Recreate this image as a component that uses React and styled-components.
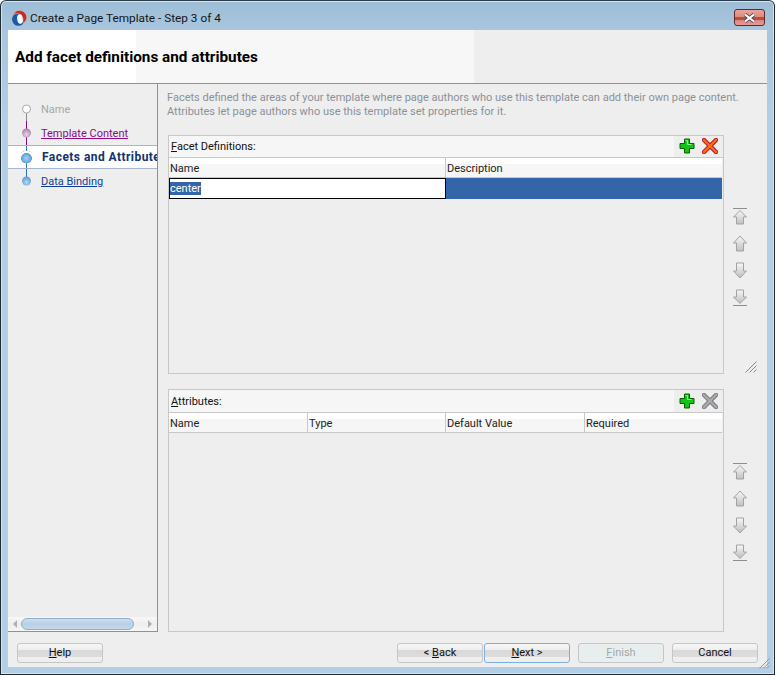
import React from "react";
import styled, { createGlobalStyle } from "styled-components";

const Global = createGlobalStyle`
  html, body { margin: 0; padding: 0; background: #fff; }
  body { font-family: Roboto, "Noto Sans", "Liberation Sans", sans-serif; font-size: 11px; color: #111; }
  * { box-sizing: border-box; }
`;

const Frame = styled.div`
  width: 775px; height: 675px; display: flex; flex-direction: column; position: relative;
  background: linear-gradient(180deg, #9dbdd6 0, #a9c6de 30px, #b3cfe8 120px, #b3cfe8 100%);
  border: 1px solid #1f2a33; border-top-color: #2a3a46; border-radius: 6px 6px 0 0;
  box-shadow: inset 0 0 0 1px #d5e4f0;
`;
const TitleBar = styled.div`
  height: 29px; flex: none; display: flex; align-items: center; padding: 5px 9px 0 10px;
`;
const TitleText = styled.span`
  margin-left: 3px; font-size: 11.8px; color: #10161c; white-space: nowrap;
`;
const CloseButton = styled.div`
  margin: 0 0 1px auto; width: 31px; height: 17px; border: 1px solid #5e2a2a; border-radius: 3px;
  display: flex; align-items: center; justify-content: center;
  background: linear-gradient(180deg, #e9a398 0, #dc8d80 45%, #b5503f 46%, #b5503f 65%, #dd837a 66%, #ea9a94 100%);
`;
const Body = styled.div`
  flex: 1; margin: 0 7px 7px 7px; background: #eeeeee; display: flex; flex-direction: column; min-height: 0;
`;
const Header = styled.div`
  height: 54px; flex: none; display: flex; align-items: center; padding-left: 7px; border-bottom: 1px solid #8f9295;
  background: linear-gradient(90deg, #fff 0, #fff 128px, #f7f7f7 128px, #f7f7f7 466px, #eeeeee 466px);
`;
const HeaderTitle = styled.h1`
  margin: 0; font-size: 15.3px; font-weight: 700; color: #000; white-space: nowrap;
`;
const Main = styled.div`
  height: 548px; flex: none; display: flex;
`;
const Nav = styled.div`
  width: 150px; flex: none; display: flex; flex-direction: column; justify-content: space-between;
  border-right: 1px solid #8f9295; border-bottom: 1px solid #8f9295; overflow: hidden;
`;
const StepList = styled.div`
  padding-top: 13px; display: flex; flex-direction: column;
`;
const StepRow = styled.div`
  position: relative; height: 24px; display: flex; align-items: center; padding-left: 33px; white-space: nowrap;
  ${p => p.$current && `
    background: #fff; border-top: 1px solid #a6b6cc; border-bottom: 1px solid #a6b6cc; padding-left: 34px;
  `}
`;
const Track = styled.span`
  position: absolute; left: 18px; width: 1px;
  top: ${p => p.$top}px; height: ${p => p.$h}px; background: ${p => p.$c};
`;
const Dot = styled.span`
  position: absolute; top: 50%; left: ${p => p.$ring ? 12 : 14}px; border-radius: 50%;
  transform: translateY(-50%);
  width: ${p => p.$ring ? 13 : 9}px; height: ${p => p.$ring ? 13 : 9}px;
  ${p => p.$ring ? `background: radial-gradient(circle at 50% 60%, #a6d2f2 0, #5e9fdc 50%, #fff 56%, #fff 70%, #7fb0dc 74%);`
    : p.$kind === "blue" ? `background: radial-gradient(circle at 50% 65%, #b4dbf6 0, #5b9ad2 75%, #7fa9cf 100%);`
    : p.$kind === "purple" ? `background: radial-gradient(circle at 50% 65%, #e6d6e8 0, #a884ac 75%, #a58aab 100%);`
    : `background: #fff; border: 1px solid #a9a9a9;`}
`;
const StepLabel = styled.span`
  ${p => p.$kind === "muted" && `color: #a8a9a2;`}
  ${p => p.$kind === "visited" && `color: #8b0a8b; text-decoration: underline;`}
  ${p => p.$kind === "link" && `color: #0f3f9c; text-decoration: underline;`}
  ${p => p.$kind === "current" && `color: #12316f; font-weight: 700; font-size: 12px; letter-spacing: .45px;`}
`;
const HScroll = styled.div`
  height: 14px; display: flex; align-items: center; background: linear-gradient(180deg,#f8f8f8,#eeeeee 50%,#f6f6f6); padding: 0 4px;
`;
const Thumb = styled.div`
  width: 113px; height: 12px; margin-left: 4px; border-radius: 6px; border: 1px solid #8fb0cc;
  background: linear-gradient(180deg,#cfdfee,#b9cfe4 50%,#c5d8ea);
`;
const ArrowL = styled.span`
  width: 0; height: 0; border-top: 4px solid transparent; border-bottom: 4px solid transparent;
  border-right: 4px solid #b5adb5; margin-left: 1px;
`;
const ArrowR = styled(ArrowL)`
  border-right: 0; border-left: 4px solid #b5adb5; margin-left: 14px;
`;
const Content = styled.div`
  flex: 1; min-width: 0; padding: 7px 0 0 9px; display: flex; flex-direction: column;
`;
const Intro = styled.p`
  margin: 0 0 16px; height: 28px; line-height: 14px; color: #8b9198; white-space: nowrap;
`;
const Section = styled.div`
  display: flex; height: ${p => p.$h}px; margin: 0 0 ${p => p.$mb || 0}px 1px;
`;
const Panel = styled.div`
  width: 556px; flex: none; border: 1px solid #c8c8c8; display: flex; flex-direction: column; background: #eeeeee;
`;
const PanelHead = styled.div`
  height: ${p => p.$h}px; flex: none; display: flex; align-items: center; padding-left: 2px; border-bottom: 1px solid #c8c8c8;
  background: linear-gradient(90deg, #f6f6f6 0, #f6f6f6 505px, #eeeeee 505px);
`;
const Tools = styled.div`
  margin-left: auto; display: flex; gap: 7px; align-items: center; padding: 0 5px 1px 0; height: 100%;
`;
const Cols = styled.div`
  display: grid; grid-template-columns: ${p => p.$cols}; height: 20px; flex: none;
  border-bottom: 1px solid #c8c8c8; margin-right: 1px; background: linear-gradient(180deg,#fff 0,#fff 6px,#f6f6f6 6px);
`;
const ColHead = styled.div`
  display: flex; align-items: center; padding: 2px 0 0 1px; border-right: 1px solid #c8c8c8; color: #222;
  &:last-child { border-right: 0; }
`;
const Row = styled.div`
  display: grid; grid-template-columns: 277px 1fr; height: 21px; margin-right: 1px;
`;
const EditCell = styled.div`
  background: #fff; border: 1px solid #000; display: flex; align-items: center;
`;
const Sel = styled.span`
  background: #3465a8; color: #fff; line-height: 13px;
`;
const SelCell = styled.div` background: #3465a8; `;
const U = styled.span` text-decoration: underline; `;
const Side = styled.div`
  flex: 1; display: flex; flex-direction: column; align-items: flex-start; padding: ${p => p.$pt}px 0 0 8px; gap: 10px;
`;
const Grip = styled.div`
  margin: auto 0 0 13px; height: 13px; line-height: 0;
`;
const Footer = styled.div`
  flex: 1; display: flex; align-items: flex-start; padding: 11px 9px 0 9px;
`;
const Btn = styled.div`
  width: 86px; height: 20px; border-radius: 3px; display: flex; align-items: center; justify-content: center; padding-bottom: 2px;
  border: 1px solid ${p => p.$focus ? "#7fb0dc" : "#c6c6c6"};
  margin-left: ${p => p.$ml || 0}px; color: ${p => p.$disabled ? "#a4a8a8" : "#111"};
  background: ${p => p.$disabled ? "#e8eeee" :
    "linear-gradient(180deg,#f6f6f6 0,#f0f0f0 30%,#d9d9d9 35%,#dcdcdc 70%,#f0f0f0 75%,#eeeeee 100%)"};
`;
const FrameGrip = styled.div`
  position: absolute; left: 758px; top: 657px; line-height: 0;
`;

const Logo = () => (
  <svg width="16" height="16" viewBox="0 0 16 16">
    <circle cx="8.5" cy="7.5" r="7" fill="#f08a6a" />
    <path d="M3 3.5A7 7 0 0 1 15.4 8C15 10 14 11.5 12.5 12.5 13 9 12 5 8 3.5 6 2.9 4.5 3 3 3.5Z" fill="#d8261c" />
    <path d="M3 5A6.2 6.2 0 0 0 9 15.4C11 15.4 12.5 14 12.5 11 12.5 7.5 10 3.8 7 3.8 5.4 3.8 4 4 3 5Z" fill="#1d5aa6" />
    <ellipse cx="9" cy="9" rx="2.8" ry="4.8" fill="#fff" transform="rotate(-8 9 9)" />
  </svg>
);
const CloseX = () => (
  <svg width="13" height="10" viewBox="0 0 13 10">
    <path d="M2 1.5 11 8.5M11 1.5 2 8.5" stroke="#4c4560" strokeWidth="3.6" />
    <path d="M2 1.5 11 8.5M11 1.5 2 8.5" stroke="#fff" strokeWidth="2.2" />
  </svg>
);
const Plus = () => (
  <svg width="16" height="16" viewBox="0 0 16 16">
    <path d="M5.5 1h5v4.5H15v5h-4.5V15h-5v-4.5H1v-5h4.5Z" fill="#12c512" stroke="#0b5c0b" strokeWidth="1" />
    <path d="M6.5 2.5h2v4h4" fill="none" stroke="#8ef08e" strokeWidth="1" />
  </svg>
);
const Cross = ({ off }) => (
  <svg width="16" height="16" viewBox="0 0 16 16">
    <path d="M2 2 14 14M14 2 2 14" stroke={off ? "#77797b" : "#b01818"} strokeWidth="4.4" strokeLinecap="square" />
    <path d="M2 2 14 14M14 2 2 14" stroke={off ? "#a9abad" : "#fb6a1c"} strokeWidth="2.4" strokeLinecap="square" />
  </svg>
);
const MoveIcon = ({ dir, bar }) => {
  const up = dir === "up";
  return (
    <svg width="16" height="17" viewBox="0 0 16 17" style={{ transform: up ? "none" : "scaleY(-1)" }}>
      <defs>
        <linearGradient id={`g${dir}`} x1="0" y1="0" x2="0" y2="1">
          <stop offset="0" stopColor={up ? "#f8f8f8" : "#bcbcbc"} />
          <stop offset="1" stopColor={up ? "#c0c0c0" : "#f8f8f8"} />
        </linearGradient>
      </defs>
      {bar && <path d="M1 .5H15" stroke="#8d8d8d" />}
      <path d={bar ? "M8 2.5 14.5 9H11.5V16H4.5V9H1.5Z" : "M8 1 14.5 8H11.5V16H4.5V8H1.5Z"} fill={`url(#g${dir})`} stroke="#a2a2a2" />
    </svg>
  );
};
const GripIcon = ({ size = 12 }) => (
  <svg width={size} height={size} viewBox="0 0 12 12">
    <path d="M0.5 11.5 11.5 .5M4.5 11.5 11.5 4.5M8.5 11.5 11.5 8.5" stroke="#8b8b8b" strokeWidth="1" />
  </svg>
);
const Movers = () => (
  <>
    <MoveIcon dir="up" bar />
    <MoveIcon dir="up" />
    <MoveIcon dir="down" />
    <MoveIcon dir="down" bar />
  </>
);

export default function App() {
  return (
    <>
      <Global />
      <Frame>
        <TitleBar>
          <Logo />
          <TitleText>Create a Page Template - Step 3 of 4</TitleText>
          <CloseButton><CloseX /></CloseButton>
        </TitleBar>
        <Body>
          <Header><HeaderTitle>Add facet definitions and attributes</HeaderTitle></Header>
          <Main>
            <Nav>
              <StepList>
                <StepRow>
                  <Track $top={16} $h={8} $c="#8a8a8a" />
                  <Dot /><StepLabel $kind="muted">Name</StepLabel>
                </StepRow>
                <StepRow>
                  <Track $top={0} $h={24} $c="#8b0a8b" />
                  <Dot $kind="purple" /><StepLabel $kind="visited">Template Content</StepLabel>
                </StepRow>
                <StepRow $current>
                  <Track $top={0} $h={22} $c="#2f74b8" />
                  <Dot $ring /><StepLabel $kind="current">Facets and Attributes</StepLabel>
                </StepRow>
                <StepRow>
                  <Track $top={0} $h={8} $c="#2f74b8" />
                  <Dot $kind="blue" /><StepLabel $kind="link">Data Binding</StepLabel>
                </StepRow>
              </StepList>
              <HScroll><ArrowL /><Thumb /><ArrowR /></HScroll>
            </Nav>
            <Content>
              <Intro>
                Facets defined the areas of your template where page authors who use this template can add their own page content.<br />
                Attributes let page authors who use this template set properties for it.
              </Intro>
              <Section $h={239} $mb={15}>
                <Panel>
                  <PanelHead $h={22}>
                    <span><U>F</U>acet Definitions:</span>
                    <Tools><Plus /><Cross /></Tools>
                  </PanelHead>
                  <Cols $cols="277px 1fr">
                    <ColHead>Name</ColHead>
                    <ColHead>Description</ColHead>
                  </Cols>
                  <Row>
                    <EditCell><Sel>center</Sel></EditCell>
                    <SelCell />
                  </Row>
                </Panel>
                <Side $pt={73}>
                  <Movers />
                  <Grip><GripIcon /></Grip>
                </Side>
              </Section>
              <Section $h={243}>
                <Panel>
                  <PanelHead $h={23}>
                    <span><U>A</U>ttributes:</span>
                    <Tools><Plus /><Cross off /></Tools>
                  </PanelHead>
                  <Cols $cols="139px 138px 139px 1fr">
                    <ColHead>Name</ColHead>
                    <ColHead>Type</ColHead>
                    <ColHead>Default Value</ColHead>
                    <ColHead>Required</ColHead>
                  </Cols>
                </Panel>
                <Side $pt={74}>
                  <Movers />
                </Side>
              </Section>
            </Content>
          </Main>
          <Footer>
            <Btn><span><U>H</U>elp</span></Btn>
            <Btn $ml={294}><span>&lt; <U>B</U>ack</span></Btn>
            <Btn $ml={1} $focus><span><U>N</U>ext &gt;</span></Btn>
            <Btn $ml={8} $disabled><span><U>F</U>inish</span></Btn>
            <Btn $ml={8}>Cancel</Btn>
          </Footer>
        </Body>
        <FrameGrip><GripIcon size={11} /></FrameGrip>
      </Frame>
    </>
  );
}
